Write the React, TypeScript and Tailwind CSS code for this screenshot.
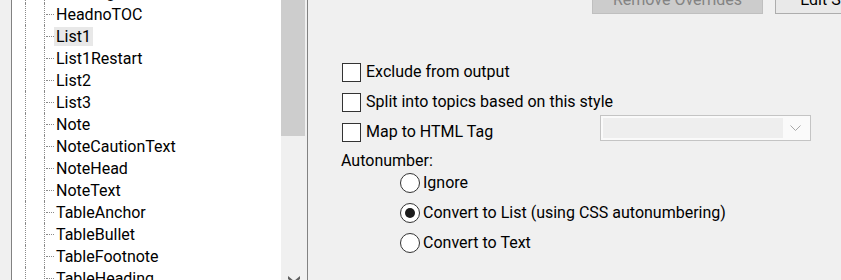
const styles = [
  "HeadingRunIn",
  "HeadnoTOC",
  "List1",
  "List1Restart",
  "List2",
  "List3",
  "Note",
  "NoteCautionText",
  "NoteHead",
  "NoteText",
  "TableAnchor",
  "TableBullet",
  "TableFootnote",
  "TableHeading",
];

const options = [
  { label: "Exclude from output" },
  { label: "Split into topics based on this style" },
];

const autonumber = [
  { label: "Ignore", checked: false },
  { label: "Convert to List (using CSS autonumbering)", checked: true },
  { label: "Convert to Text", checked: false },
];

const Checkbox = ({ label }: { label: string }) => (
  <div className="flex items-center">
    <span className="size-[19px] shrink-0 border border-[#333333] bg-white" />
    <span className="ml-[5px] whitespace-nowrap">{label}</span>
  </div>
);

const Radio = ({ label, checked }: { label: string; checked: boolean }) => (
  <div className="flex h-[30px] items-center">
    <span className="flex size-[20px] shrink-0 items-center justify-center rounded-full border border-[#333333] bg-white">
      {checked && <span className="size-[10px] rounded-full bg-[#1a1a1a]" />}
    </span>
    <span className="ml-[3px] whitespace-nowrap">{label}</span>
  </div>
);

const StyleTree = () => (
  <div className="flex w-[297px] shrink-0 border-x border-[#828282] bg-white">
    <div className="flex-1 overflow-hidden">
      <div className="mt-[-19px] flex flex-col">
        {styles.map((name) => (
          <div key={name} className="flex h-[22px] items-stretch">
            <div className="w-[13px] shrink-0" />
            <div className="w-[19px] shrink-0 border-l border-dotted border-[#8a8a8a]" />
            <div className="flex w-[10px] shrink-0 items-center border-l border-dotted border-[#8a8a8a]">
              <div className="ml-[1px] w-[8px] border-t border-dotted border-[#8a8a8a]" />
            </div>
            <div className="flex items-center">
              <span
                className={`h-[19px] whitespace-nowrap px-[2px] leading-[19px] ${
                  name === "List1" ? "bg-[#e8e8e8]" : ""
                }`}
              >
                {name}
              </span>
            </div>
          </div>
        ))}
      </div>
    </div>
    <div className="flex w-[26px] shrink-0 flex-col bg-[#f0f0f0]">
      <div className="h-[136px] w-[24px] bg-[#cdcdcd]" />
      <div className="flex-1" />
      <div className="h-[4px] overflow-hidden pl-[7px]">
        <svg width="12" height="8" viewBox="0 0 12 8">
          <path d="M0 0 L6 5 L12 0 L12 3 L6 8 L0 3 Z" fill="#606060" />
        </svg>
      </div>
    </div>
  </div>
);

export default function App() {
  return (
    <div className="flex h-[280px] w-[841px] overflow-hidden bg-[#f0f0f0] font-['Roboto',sans-serif] text-[16px] text-black">
      <div className="w-[11px] shrink-0" />
      <StyleTree />

      <div className="flex min-w-0 flex-1 flex-col">
        <div className="mt-[-15px] flex gap-[12px] pl-[284px]">
          <div className="flex h-[29px] w-[171px] shrink-0 items-center justify-center border border-[#bfbfbf] bg-[#cccccc] text-[#838383]">
            Remove Overrides
          </div>
          <div className="flex h-[29px] w-[116px] shrink-0 items-center justify-center border border-[#adadad] bg-[#e9e9e9]">
            Edit Style
          </div>
        </div>

        <div className="mt-[43px] flex flex-col pl-[34px]">
          {options.map((option) => (
            <div key={option.label} className="flex h-[30px] items-center">
              <Checkbox label={option.label} />
            </div>
          ))}
          <div className="flex h-[30px] items-center">
            <div className="w-[258px] shrink-0">
              <Checkbox label="Map to HTML Tag" />
            </div>
            <div className="mt-[-2px] flex h-[26px] w-[211px] shrink-0 self-start border border-[#c4c4c4] bg-[#fafafa] p-[2px]">
              <div className="h-full w-[180px] bg-[#eeeeee]" />
              <div className="flex flex-1 items-center justify-center">
                <svg width="11" height="7" viewBox="0 0 11 7">
                  <polyline points="0.5,0.5 5.5,5.5 10.5,0.5" fill="none" stroke="#a8a8a8" strokeWidth="1" />
                </svg>
              </div>
            </div>
          </div>
        </div>

        <div className="mt-[4px] h-[20px] pl-[33px] leading-[20px]">Autonumber:</div>

        <div className="mt-[-3px] flex flex-col pl-[92px]">
          {autonumber.map((item) => (
            <Radio key={item.label} label={item.label} checked={item.checked} />
          ))}
        </div>
      </div>
    </div>
  );
}
